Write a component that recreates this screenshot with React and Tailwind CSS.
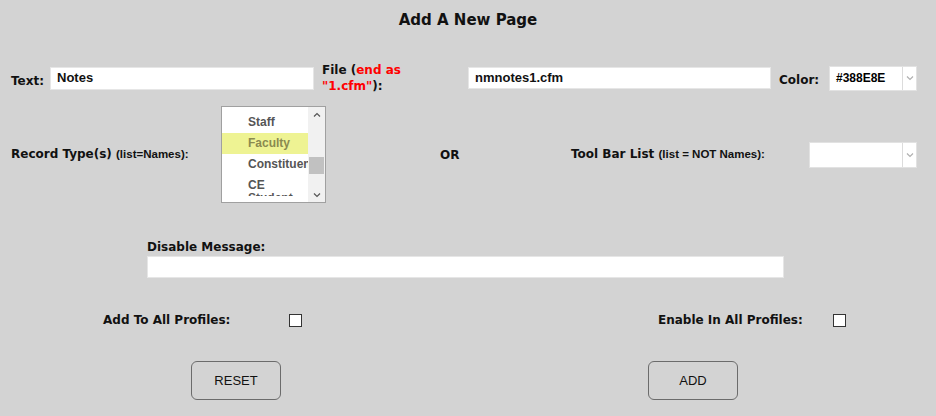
import React from "react";

function Chevron({ dir = "down", className = "" }) {
  return (
    <svg width="8" height="6" viewBox="0 0 8 6" className={className}>
      {dir === "down" ? (
        <path d="M1 1.5 L4 4.5 L7 1.5" fill="none" stroke="currentColor" strokeWidth="1.2" />
      ) : (
        <path d="M1 4.5 L4 1.5 L7 4.5" fill="none" stroke="currentColor" strokeWidth="1.2" />
      )}
    </svg>
  );
}

const LBL = { fontFamily: '"DejaVu Sans", Verdana, sans-serif' };
const SMALL = { fontFamily: '"Liberation Sans", Arial, sans-serif', fontWeight: 700, fontSize: "11.5px" };

function Select({ value, w, h }) {
  return (
    <div className={`flex bg-white ${w} ${h} border border-[#e2e2e2]`}>
      <div className="flex-1 flex items-center pl-[6px] text-[12px] font-bold text-black">{value}</div>
      <div className="w-[14px] border-l border-[#dcdcdc] flex items-center justify-center text-[#b0b0b0]">
        <Chevron />
      </div>
    </div>
  );
}

export default function App() {
  const items = ["Staff", "Faculty", "Constituent", "CE Student"];
  return (
    <div className="w-[936px] h-[416px] bg-[#d3d3d3] text-[#111] overflow-hidden" style={{ fontFamily: '"Liberation Sans", Arial, sans-serif' }}>
      <div className="pt-[11px] h-[31px] text-center text-[15px] font-bold leading-[18px]" style={LBL}>Add A New Page</div>

      {/* Row 1 */}
      <div className="mt-[33px] flex items-center h-[28px]">
        <div className="ml-[11px] w-[39px] text-[12px] font-bold pt-[5px]" style={LBL}>Text:</div>
        <div className="w-[264px] h-[23px] bg-white border border-[#e6e6e6] flex items-center pl-[6px] text-[13px] font-bold">Notes</div>
        <div className="ml-[8px] w-[146px] text-[12px] font-bold leading-[16px]" style={LBL}>
          File (<span className="text-[#ff0000]">end as</span>
          <br />
          <span className="text-[#ff0000]">"1.cfm"</span>):
        </div>
        <div className="w-[303px] h-[22px] bg-white border border-[#e6e6e6] flex items-center pl-[6px] text-[13px] font-bold">nmnotes1.cfm</div>
        <div className="ml-[8px] w-[50px] text-[12px] font-bold pt-[3px]" style={LBL}>Color:</div>
        <Select value="#388E8E" w="w-[88px]" h="h-[25px]" />
      </div>

      {/* Row 2 */}
      <div className="mt-[14px] flex items-center h-[97px]">
        <div className="ml-[11px] w-[210px] text-[12px] font-bold whitespace-nowrap" style={LBL}>
          Record Type(s) <span style={SMALL}>(list=Names):</span>
        </div>
        <div className="w-[105px] h-[97px] bg-white border border-[#a0a0a0] flex overflow-hidden">
          <div className="flex-1 min-w-0 pt-[5px] overflow-hidden">
            {items.map((it) => (
              <div
                key={it}
                className={`h-[21px] pl-[26px] text-[12px] font-bold leading-[13px] flex items-center whitespace-nowrap overflow-hidden ${
                  it === "Faculty" ? "bg-[#eef393] text-[#8a8a50]" : "text-[#555]"
                }`}
              >
                {it === "CE Student" ? (
                  <span className="block pt-[12px]">
                    CE
                    <br />
                    Student
                  </span>
                ) : (
                  it
                )}
              </div>
            ))}
          </div>
          <div className="w-[17px] shrink-0 bg-[#f1f1f1] flex flex-col items-center">
            <div className="h-[15px] flex items-center justify-center text-[#555]">
              <Chevron dir="up" />
            </div>
            <div className="flex-1 w-full relative">
              <div className="absolute left-[1px] right-[1px] top-[35px] h-[17px] bg-[#c1c1c1]" />
            </div>
            <div className="h-[15px] flex items-center justify-center text-[#555]">
              <Chevron dir="down" />
            </div>
          </div>
        </div>
        <div className="ml-[114px] w-[131px] text-[12px] font-bold" style={LBL}>OR</div>
        <div className="w-[238px] text-[12px] font-bold whitespace-nowrap" style={LBL}>
          Tool Bar List <span style={SMALL}>(list = NOT Names):</span>
        </div>
        <Select value="" w="w-[108px]" h="h-[26px]" />
      </div>

      {/* Disable message */}
      <div className="mt-[37px] ml-[147px]">
        <div className="text-[12px] font-bold leading-[15px]" style={LBL}>Disable Message:</div>
        <div className="mt-[1px] w-[637px] h-[22px] bg-white border border-[#e6e6e6]" />
      </div>

      {/* Checkboxes */}
      <div className="mt-[35px] flex items-center h-[14px]">
        <div className="ml-[103px] w-[186px] text-[12px] font-bold whitespace-nowrap" style={LBL}>Add To All Profiles:</div>
        <div className="w-[13px] h-[13px] bg-white border border-[#333]" />
        <div className="ml-[356px] w-[175px] text-[12px] font-bold whitespace-nowrap" style={LBL}>Enable In All Profiles:</div>
        <div className="w-[13px] h-[13px] bg-white border border-[#333]" />
      </div>

      {/* Buttons */}
      <div className="mt-[34px] flex">
        <button className="ml-[191px] w-[90px] h-[39px] rounded-[6px] border border-[#6b6b6b] text-[13px] text-[#111]">RESET</button>
        <button className="ml-[367px] w-[90px] h-[39px] rounded-[6px] border border-[#6b6b6b] text-[13px] text-[#111]">ADD</button>
      </div>
    </div>
  );
}
